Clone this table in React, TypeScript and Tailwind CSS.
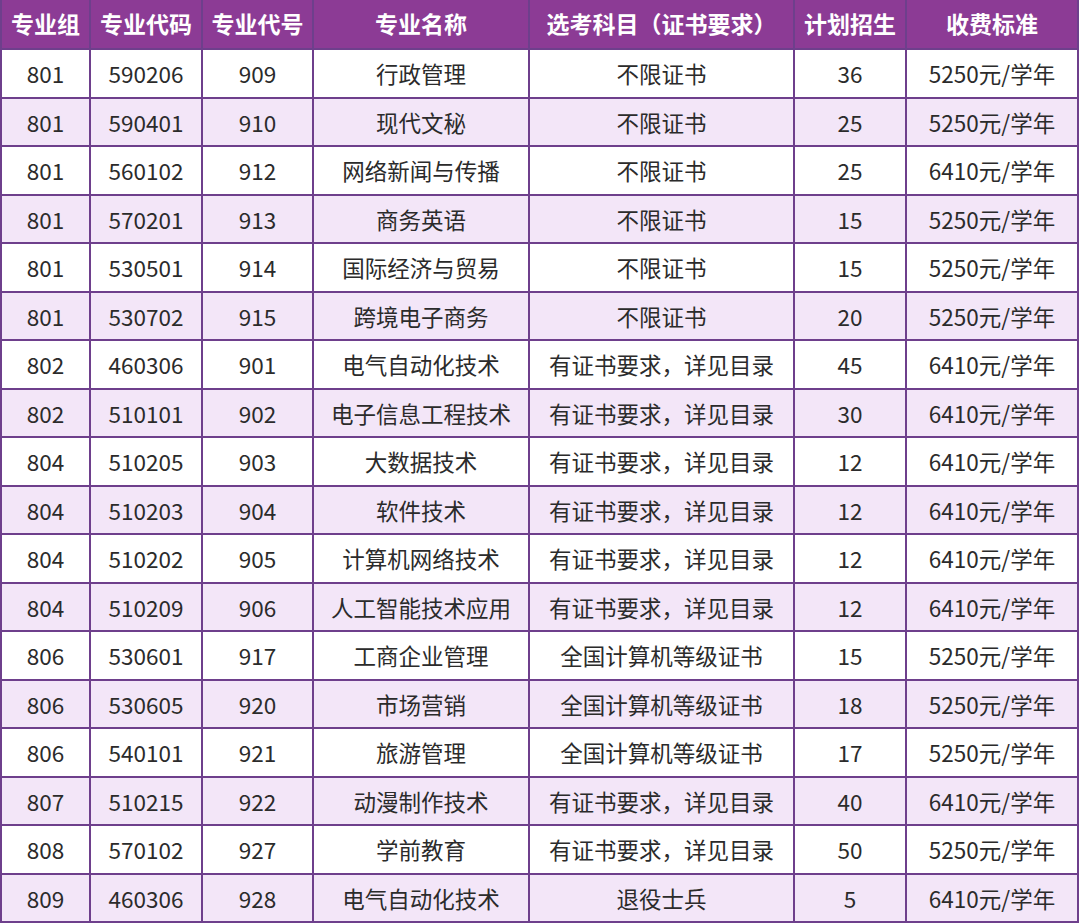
import React from "react";

const headers = ["专业组", "专业代码", "专业代号", "专业名称", "选考科目（证书要求）", "计划招生", "收费标准"];

const rows: string[][] = [
  ["801", "590206", "909", "行政管理", "不限证书", "36", "5250元/学年"],
  ["801", "590401", "910", "现代文秘", "不限证书", "25", "5250元/学年"],
  ["801", "560102", "912", "网络新闻与传播", "不限证书", "25", "6410元/学年"],
  ["801", "570201", "913", "商务英语", "不限证书", "15", "5250元/学年"],
  ["801", "530501", "914", "国际经济与贸易", "不限证书", "15", "5250元/学年"],
  ["801", "530702", "915", "跨境电子商务", "不限证书", "20", "5250元/学年"],
  ["802", "460306", "901", "电气自动化技术", "有证书要求，详见目录", "45", "6410元/学年"],
  ["802", "510101", "902", "电子信息工程技术", "有证书要求，详见目录", "30", "6410元/学年"],
  ["804", "510205", "903", "大数据技术", "有证书要求，详见目录", "12", "6410元/学年"],
  ["804", "510203", "904", "软件技术", "有证书要求，详见目录", "12", "6410元/学年"],
  ["804", "510202", "905", "计算机网络技术", "有证书要求，详见目录", "12", "6410元/学年"],
  ["804", "510209", "906", "人工智能技术应用", "有证书要求，详见目录", "12", "6410元/学年"],
  ["806", "530601", "917", "工商企业管理", "全国计算机等级证书", "15", "5250元/学年"],
  ["806", "530605", "920", "市场营销", "全国计算机等级证书", "18", "5250元/学年"],
  ["806", "540101", "921", "旅游管理", "全国计算机等级证书", "17", "5250元/学年"],
  ["807", "510215", "922", "动漫制作技术", "有证书要求，详见目录", "40", "6410元/学年"],
  ["808", "570102", "927", "学前教育", "有证书要求，详见目录", "50", "5250元/学年"],
  ["809", "460306", "928", "电气自动化技术", "退役士兵", "5", "6410元/学年"],
];

export default function App() {
  return (
    <div className="w-[1080px] h-[923px] bg-white overflow-hidden font-['Noto_Sans_CJK_SC','Noto_Sans',sans-serif]">
      <div className="w-[1079px] grid grid-cols-[89px_112px_111px_216px_265px_112px_172px] grid-rows-[50px_repeat(18,48.5px)] border-l-2 border-[#6e3f8c]">
        {headers.map((h) => (
          <div
            key={h}
            className="flex items-center justify-center bg-[#8c3b95] border-r-2 border-b-2 border-[#6e3f8c] text-white text-[23px] font-bold leading-none pb-[2px]"
          >
            {h}
          </div>
        ))}
        {rows.map((r, ri) =>
          r.map((c, ci) => (
            <div
              key={`${ri}-${ci}`}
              className={`flex items-center justify-center border-r-2 border-b-2 border-[#6e3f8c] text-[#2b2b2b] text-[22.5px] leading-none whitespace-nowrap ${
                ri % 2 === 1 ? "bg-[#f3e6f8]" : "bg-white"
              }`}
            >
              {c}
            </div>
          ))
        )}
      </div>
    </div>
  );
}
